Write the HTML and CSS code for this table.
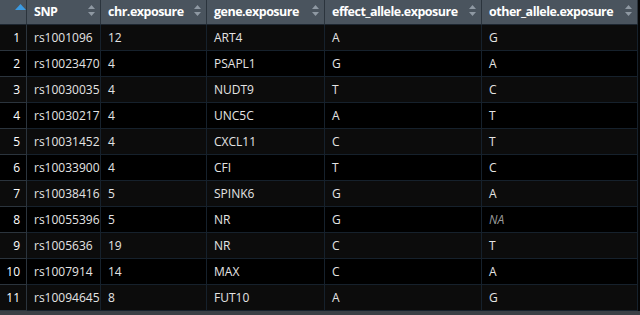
FILE: index.html
```html
<!DOCTYPE html>
<html>
<head>
<meta charset="utf-8">
<link rel="stylesheet" href="styles.css">
</head>
<body>
<div class="wrap">
<table class="grid">
<colgroup>
<col class="c-idx"><col class="c-snp"><col class="c-chr"><col class="c-gene"><col class="c-eff"><col class="c-oth">
</colgroup>
<thead>
<tr>
<th class="idx-h"><svg class="asc" width="11" height="6" viewBox="0 0 11 6"><polygon points="0,6 5.5,0 11,6" fill="#3b9ae1"/></svg></th>
<th><span>SNP</span><svg class="sort" width="7" height="11" viewBox="0 0 7 11"><polygon points="0,4 3.5,0 7,4" /><polygon points="0,7 3.5,11 7,7" /></svg></th>
<th><span>chr.exposure</span><svg class="sort" width="7" height="11" viewBox="0 0 7 11"><polygon points="0,4 3.5,0 7,4" /><polygon points="0,7 3.5,11 7,7" /></svg></th>
<th><span>gene.exposure</span><svg class="sort" width="7" height="11" viewBox="0 0 7 11"><polygon points="0,4 3.5,0 7,4" /><polygon points="0,7 3.5,11 7,7" /></svg></th>
<th><span>effect_allele.exposure</span><svg class="sort" width="7" height="11" viewBox="0 0 7 11"><polygon points="0,4 3.5,0 7,4" /><polygon points="0,7 3.5,11 7,7" /></svg></th>
<th><span>other_allele.exposure</span><svg class="sort" width="7" height="11" viewBox="0 0 7 11"><polygon points="0,4 3.5,0 7,4" /><polygon points="0,7 3.5,11 7,7" /></svg></th>
</tr>
</thead>
<tbody>
<tr><td class="idx">1</td><td>rs1001096</td><td>12</td><td>ART4</td><td>A</td><td>G</td></tr>
<tr><td class="idx">2</td><td>rs10023470</td><td>4</td><td>PSAPL1</td><td>G</td><td>A</td></tr>
<tr><td class="idx">3</td><td>rs10030035</td><td>4</td><td>NUDT9</td><td>T</td><td>C</td></tr>
<tr><td class="idx">4</td><td>rs10030217</td><td>4</td><td>UNC5C</td><td>A</td><td>T</td></tr>
<tr><td class="idx">5</td><td>rs10031452</td><td>4</td><td>CXCL11</td><td>C</td><td>T</td></tr>
<tr><td class="idx">6</td><td>rs10033900</td><td>4</td><td>CFI</td><td>T</td><td>C</td></tr>
<tr><td class="idx">7</td><td>rs10038416</td><td>5</td><td>SPINK6</td><td>G</td><td>A</td></tr>
<tr><td class="idx">8</td><td>rs10055396</td><td>5</td><td>NR</td><td>G</td><td class="na">NA</td></tr>
<tr><td class="idx">9</td><td>rs1005636</td><td>19</td><td>NR</td><td>C</td><td>T</td></tr>
<tr><td class="idx">10</td><td>rs1007914</td><td>14</td><td>MAX</td><td>C</td><td>A</td></tr>
<tr><td class="idx">11</td><td>rs10094645</td><td>8</td><td>FUT10</td><td>A</td><td>G</td></tr>
</tbody>
</table>
<div class="hscroll"></div>
</div>
</body>
</html>
```
FILE: styles.css
```css
html, body {
  margin: 0;
  padding: 0;
  background: #000;
  overflow: hidden;
}
.wrap {
  width: 640px;
  height: 315px;
  background: #050505;
  display: flex;
  flex-direction: column;
}
.grid {
  border-collapse: separate;
  border-spacing: 0;
  table-layout: fixed;
  width: 638px;
  font-family: "Open Sans", "Noto Sans", sans-serif;
  font-size: 12px;
  color: #e4e4e4;
}
.c-idx { width: 27px; }
.c-snp { width: 74px; }
.c-chr { width: 106px; }
.c-gene { width: 118px; }
.c-eff { width: 157px; }
.c-oth { width: 156px; }

.grid th {
  background: #4a545e;
  color: #ffffff;
  font-weight: 700;
  font-size: 12.5px;
  letter-spacing: -0.5px;
  text-align: left;
  height: 24px;
  padding: 0 0 0 7px;
  border-right: 1px solid #2b343d;
  border-bottom: 1px solid #1d2630;
  position: relative;
  white-space: nowrap;
  overflow: hidden;
}
.grid th span {
  display: block;
  line-height: 24px;
}
.grid th.idx-h {
  padding: 0;
}
.asc {
  position: absolute;
  left: 15px;
  top: 4px;
}
.sort {
  position: absolute;
  right: 5px;
  top: 5px;
  fill: #8f99a3;
}
.grid td {
  height: 25px;
  padding: 1px 0 0 7px;
  box-sizing: border-box;
  border-right: 1px solid #16212c;
  border-bottom: 1px solid #16212c;
  white-space: nowrap;
  overflow: hidden;
  line-height: 24px;
}
.grid tbody tr {
  height: 26px;
}
.grid tbody tr:nth-child(odd) td {
  background: #0c0c0c;
}
.grid tbody tr:nth-child(even) td {
  background: #000000;
}
.grid tbody td.idx {
  background: #4b5560;
  color: #ffffff;
  text-align: right;
  padding: 1px 6px 0 0;
  border-right: 1px solid #2b343d;
  border-bottom: 1px solid #2b343d;
}
.grid td.na {
  font-style: italic;
  color: #9a9a9a;
}
.hscroll {
  flex: 1;
  background: #3b4046;
}
```
